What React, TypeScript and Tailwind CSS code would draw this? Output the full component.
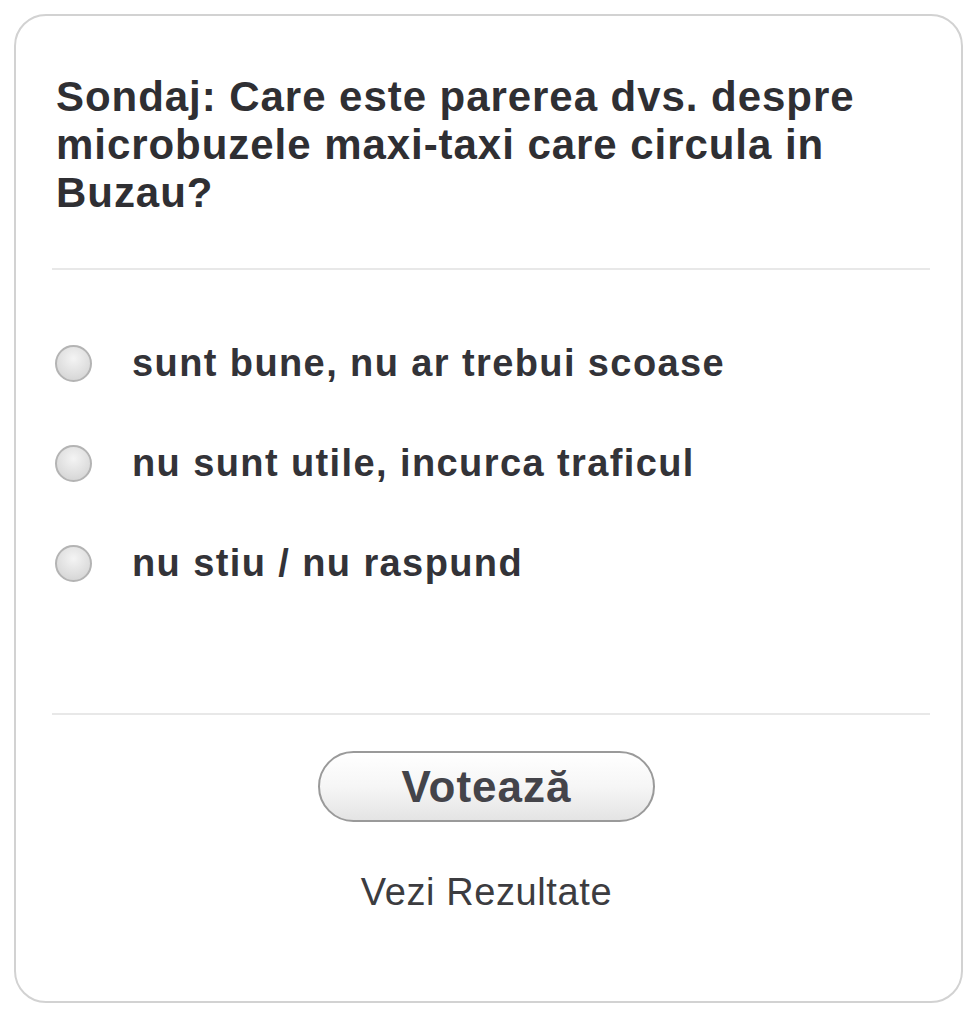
import React from "react";

function Radio() {
  return (
    <span className="block w-[37px] h-[37px] rounded-full border-2 border-[#b4b4b4] bg-[radial-gradient(circle_at_50%_35%,#f4f4f4_0%,#dedede_60%,#cfcfcf_100%)] shrink-0" />
  );
}

const options = [
  "sunt bune, nu ar trebui scoase",
  "nu sunt utile, incurca traficul",
  "nu stiu / nu raspund",
];

export default function App() {
  return (
    <div className="w-[980px] h-[1024px] bg-white pt-[14px] pl-[14px] font-['Liberation_Sans',Arial,sans-serif]">
      <div className="w-[949px] h-[989px] border-2 border-[#d2d2d2] rounded-[32px] flex flex-col">
        <div className="pt-[57px] pl-[40px] pr-[30px] text-[42px] leading-[48px] font-bold text-[#2f2f33] tracking-[0.95px]">
          Sondaj: Care este parerea dvs. despre microbuzele maxi-taxi care circula in Buzau?
        </div>
        <div className="mt-[51px] ml-[36px] mr-[31px] h-[2px] bg-[#e8e8e8]" />
        <div className="flex flex-col pt-[75px] gap-[63px] pl-[39px]">
          {options.map((o) => (
            <label key={o} className="flex items-center h-[37px]">
              <Radio />
              <span className="ml-[40px] text-[38px] font-bold text-[#333338] tracking-[1.4px] leading-[37px]">{o}</span>
            </label>
          ))}
        </div>
        <div className="mt-[131px] ml-[36px] mr-[31px] h-[2px] bg-[#e8e8e8]" />
        <div className="flex justify-center mt-[36px]">
          <button className="w-[337px] h-[71px] rounded-full border-2 border-[#9a9a9a] bg-[linear-gradient(to_bottom,#ffffff_0%,#f6f6f6_50%,#e4e4e4_100%)] text-[44px] font-bold text-[#44444a] leading-none tracking-[1px] mr-[4px]">
            Votează
          </button>
        </div>
        <div className="flex justify-center mt-[48px]">
          <span className="text-[38px] leading-[44px] text-[#3c3c40] tracking-[0.6px] mr-[4px]">Vezi Rezultate</span>
        </div>
      </div>
    </div>
  );
}
